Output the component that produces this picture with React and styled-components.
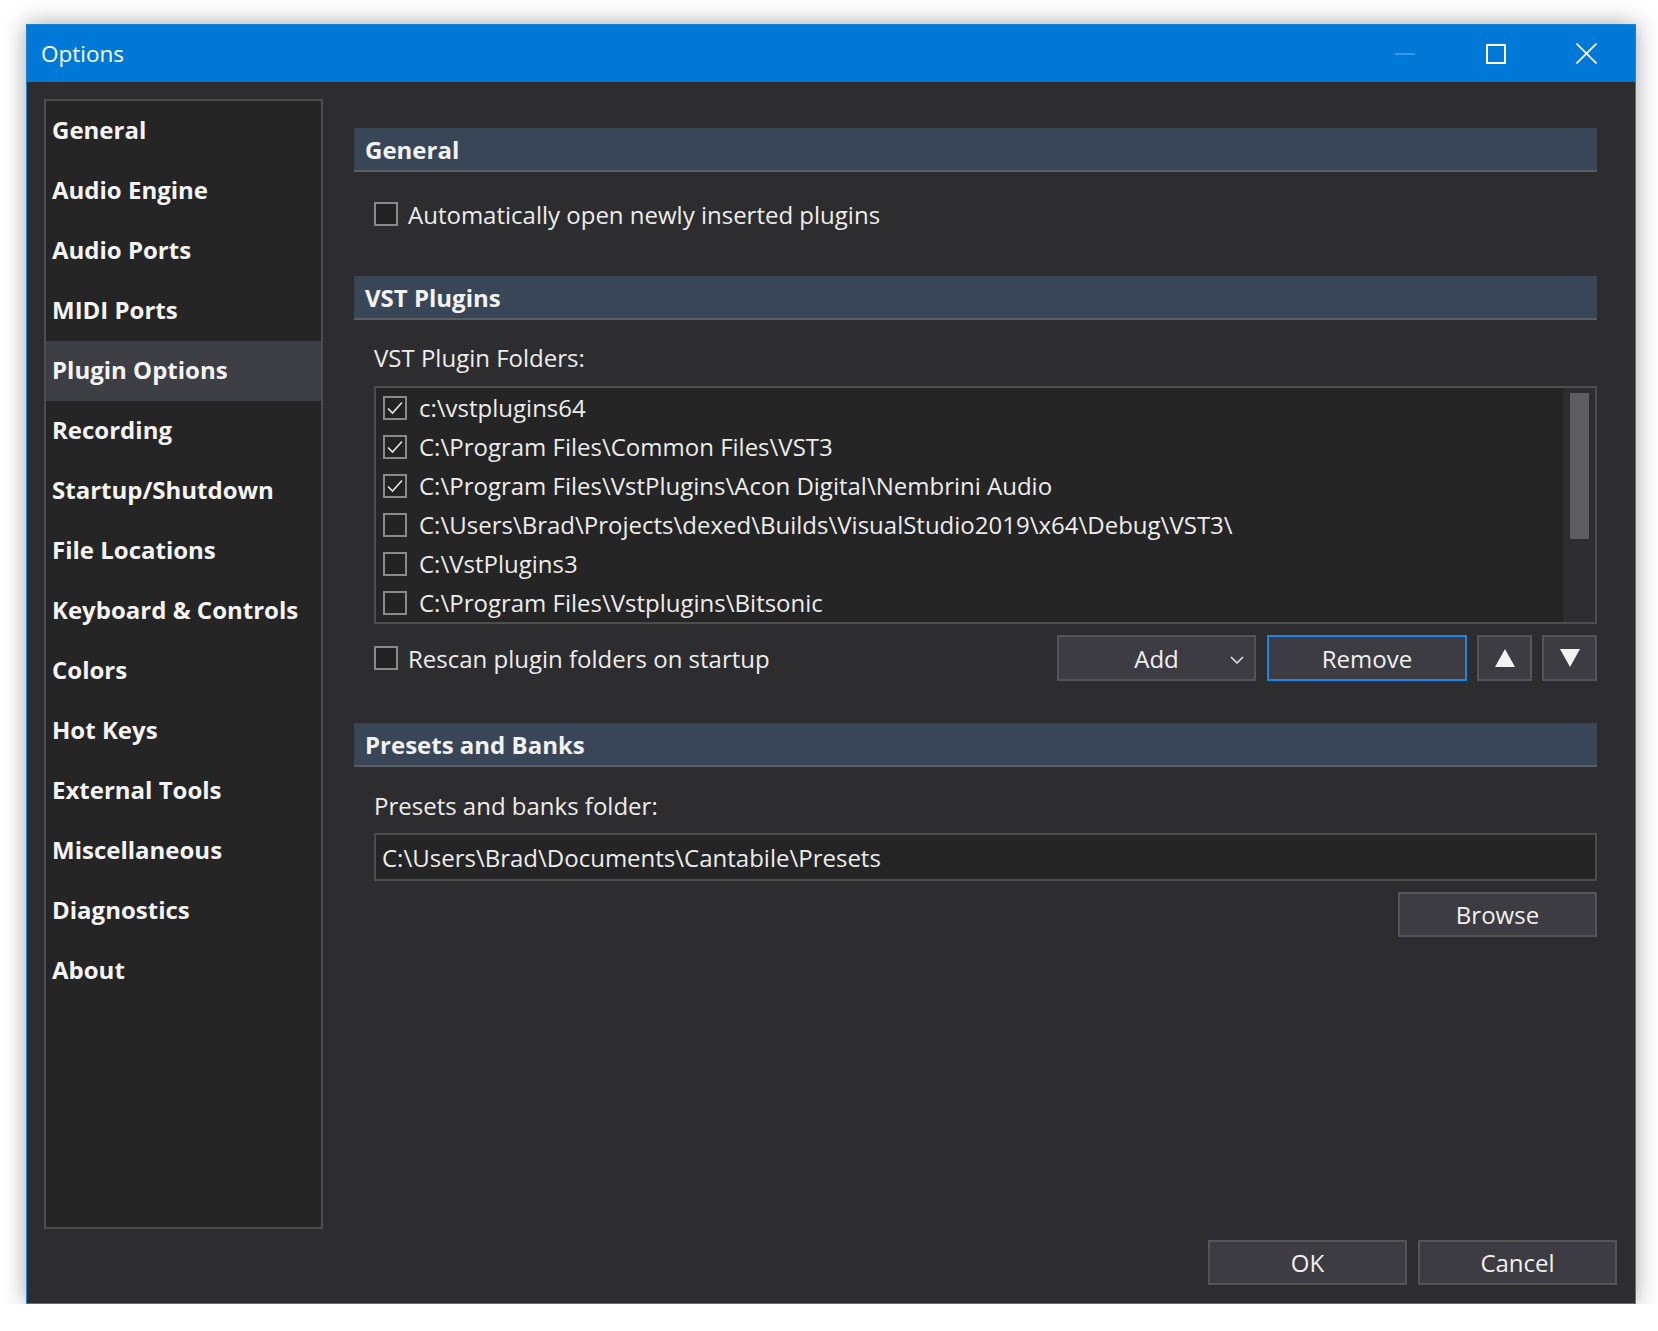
import React from 'react';
import styled, { createGlobalStyle } from 'styled-components';

const GlobalStyle = createGlobalStyle`
  * { box-sizing: border-box; }
  html, body {
    margin: 0;
    padding: 0;
    background: #ffffff;
    font-family: "Open Sans", "Noto Sans", sans-serif;
  }
`;

const Window = styled.div`
  margin: 24px 0 0 26px;
  width: 1610px;
  height: 1280px;
  border: 1px solid #1a82d8;
  background: #2d2d30;
  box-shadow: 0 0 22px rgba(0, 0, 0, 0.35);
  display: flex;
  flex-direction: column;
`;

const TitleBar = styled.div`
  height: 57px;
  background: #0078d7;
  display: flex;
  align-items: center;
  padding: 0 3px 0 14px;
  flex-shrink: 0;
`;

const Title = styled.div`
  flex: 1;
  color: #ffffff;
  font-size: 22.5px;
  font-weight: 400;
`;

const CaptionButton = styled.div`
  width: 91px;
  height: 57px;
  display: flex;
  align-items: center;
  justify-content: center;
`;

const Body = styled.div`
  flex: 1;
  display: flex;
  flex-direction: column;
  padding: 17px 18px 18px 17px;
  min-height: 0;
`;

const Main = styled.div`
  flex: 1;
  display: flex;
  min-height: 0;
`;

const Sidebar = styled.nav`
  width: 279px;
  border: 2px solid #4d4d4d;
  background: #252526;
  flex-shrink: 0;
`;

const NavItem = styled.div`
  height: 60px;
  line-height: 58px;
  padding-left: 6px;
  color: #f4f4f4;
  font-size: 24px;
  font-weight: 700;
  background: ${p => (p.$active ? '#3e3f45' : 'transparent')};
`;

const Content = styled.div`
  flex: 1;
  padding: 29px 20px 0 31px;
  display: flex;
  flex-direction: column;
`;

const SectionHeader = styled.div`
  height: 44px;
  background: #394657;
  border-bottom: 2px solid #5a5f66;
  padding-left: 11px;
  display: flex;
  align-items: center;
  color: #f2f2f2;
  font-size: 24px;
  font-weight: 700;
  margin-top: ${p => p.$gap || 0}px;
`;

const Section = styled.div`
  padding-left: 20px;
  display: flex;
  flex-direction: column;
`;

const CheckRow = styled.label`
  display: flex;
  align-items: center;
  gap: ${p => p.$gap || 10}px;
  height: ${p => p.$height || 40}px;
  margin-top: ${p => p.$top || 0}px;
  color: #ececec;
  font-size: 24px;
  white-space: nowrap;
`;

const Box = styled.span`
  width: 24px;
  height: 24px;
  border: 2px solid #8a8a8a;
  background: #232324;
  display: flex;
  align-items: center;
  justify-content: center;
  flex-shrink: 0;
`;

const Label = styled.div`
  height: 34px;
  line-height: 34px;
  margin-top: ${p => p.$top || 0}px;
  color: #ececec;
  font-size: 24px;
`;

const ListBox = styled.div`
  margin-top: 11px;
  height: 238px;
  border: 2px solid #4d4d4d;
  background: #252526;
  display: flex;
`;

const Rows = styled.div`
  flex: 1;
  padding-left: 7px;
`;

const ScrollTrack = styled.div`
  width: 32px;
  background: #2e2e31;
  padding: 5px 6px 0 7px;
`;

const ScrollThumb = styled.div`
  height: 146px;
  background: #5e5e60;
`;

const ButtonRow = styled.div`
  margin-top: 11px;
  height: 46px;
  display: flex;
  align-items: center;
`;

const Spacer = styled.div`
  flex: 1;
`;

const Button = styled.button`
  width: ${p => p.$w || 199}px;
  height: ${p => p.$h || 46}px;
  margin-left: ${p => p.$ml || 0}px;
  background: #3c3c42;
  border: 2px solid ${p => (p.$focus ? '#1a86e6' : '#555559')};
  color: #f0f0f0;
  font-family: "Open Sans", "Noto Sans", sans-serif;
  font-size: 24px;
  padding: 0;
  position: relative;
  display: flex;
  align-items: center;
  justify-content: center;
`;

const Chevron = styled.svg`
  position: absolute;
  right: 10px;
  top: 19px;
`;

const PathInput = styled.div`
  margin-top: 10px;
  height: 48px;
  border: 2px solid #4d4d4d;
  background: #252526;
  color: #ececec;
  font-size: 24px;
  display: flex;
  align-items: center;
  padding-left: 6px;
`;

const BrowseRow = styled.div`
  margin-top: 11px;
  display: flex;
  justify-content: flex-end;
`;

const Footer = styled.div`
  margin-top: 11px;
  display: flex;
  justify-content: flex-end;
  gap: 11px;
`;

const Check = () => (
  <svg width="18" height="16" viewBox="0 0 18 16">
    <polyline points="2,8.5 6.5,13 16,2.5" fill="none" stroke="#e6e6e6" strokeWidth="1.6" />
  </svg>
);

const CheckBox = ({ checked }) => <Box>{checked && <Check />}</Box>;

const navItems = [
  'General', 'Audio Engine', 'Audio Ports', 'MIDI Ports', 'Plugin Options', 'Recording',
  'Startup/Shutdown', 'File Locations', 'Keyboard & Controls', 'Colors', 'Hot Keys',
  'External Tools', 'Miscellaneous', 'Diagnostics', 'About',
];

const folders = [
  { path: 'c:\\vstplugins64', on: true },
  { path: 'C:\\Program Files\\Common Files\\VST3', on: true },
  { path: 'C:\\Program Files\\VstPlugins\\Acon Digital\\Nembrini Audio', on: true },
  { path: 'C:\\Users\\Brad\\Projects\\dexed\\Builds\\VisualStudio2019\\x64\\Debug\\VST3\\', on: false },
  { path: 'C:\\VstPlugins3', on: false },
  { path: 'C:\\Program Files\\Vstplugins\\Bitsonic', on: false },
];

const App = () => (
  <>
    <GlobalStyle />
    <Window>
      <TitleBar>
        <Title>Options</Title>
        <CaptionButton>
          <svg width="20" height="4"><line x1="0" y1="2" x2="20" y2="2" stroke="#4fa2e6" strokeWidth="1.5" /></svg>
        </CaptionButton>
        <CaptionButton>
          <svg width="20" height="20"><rect x="1" y="1" width="18" height="18" fill="none" stroke="#fff" strokeWidth="2" /></svg>
        </CaptionButton>
        <CaptionButton>
          <svg width="21" height="21">
            <line x1="0.5" y1="0.5" x2="20.5" y2="20.5" stroke="#fff" strokeWidth="1.6" />
            <line x1="20.5" y1="0.5" x2="0.5" y2="20.5" stroke="#fff" strokeWidth="1.6" />
          </svg>
        </CaptionButton>
      </TitleBar>

      <Body>
        <Main>
          <Sidebar>
            {navItems.map(item => (
              <NavItem key={item} $active={item === 'Plugin Options'}>{item}</NavItem>
            ))}
          </Sidebar>

          <Content>
            <SectionHeader>General</SectionHeader>
            <Section>
              <CheckRow $top={22}>
                <CheckBox />
                Automatically open newly inserted plugins
              </CheckRow>
            </Section>

            <SectionHeader $gap={42}>VST Plugins</SectionHeader>
            <Section>
              <Label $top={21}>VST Plugin Folders:</Label>
              <ListBox>
                <Rows>
                  {folders.map(f => (
                    <CheckRow key={f.path} $height={39} $gap={12}>
                      <CheckBox checked={f.on} />
                      {f.path}
                    </CheckRow>
                  ))}
                </Rows>
                <ScrollTrack>
                  <ScrollThumb />
                </ScrollTrack>
              </ListBox>
              <ButtonRow>
                <CheckRow>
                  <CheckBox />
                  Rescan plugin folders on startup
                </CheckRow>
                <Spacer />
                <Button $w={199}>
                  Add
                  <Chevron width="14" height="8" viewBox="0 0 14 8">
                    <polyline points="1,1 7,7 13,1" fill="none" stroke="#e6e6e6" strokeWidth="1.5" />
                  </Chevron>
                </Button>
                <Button $w={200} $ml={11} $focus>Remove</Button>
                <Button $w={55} $ml={10}>
                  <svg width="20" height="18" viewBox="0 0 20 18"><polygon points="10,0 20,18 0,18" fill="#f2f2f2" /></svg>
                </Button>
                <Button $w={55} $ml={10}>
                  <svg width="20" height="18" viewBox="0 0 20 18"><polygon points="0,0 20,0 10,18" fill="#f2f2f2" /></svg>
                </Button>
              </ButtonRow>
            </Section>

            <SectionHeader $gap={42}>Presets and Banks</SectionHeader>
            <Section>
              <Label $top={22}>Presets and banks folder:</Label>
              <PathInput>C:\Users\Brad\Documents\Cantabile\Presets</PathInput>
              <BrowseRow>
                <Button $w={199} $h={45}>Browse</Button>
              </BrowseRow>
            </Section>
          </Content>
        </Main>

        <Footer>
          <Button $w={199} $h={45}>OK</Button>
          <Button $w={199} $h={45}>Cancel</Button>
        </Footer>
      </Body>
    </Window>
  </>
);

export default App;
